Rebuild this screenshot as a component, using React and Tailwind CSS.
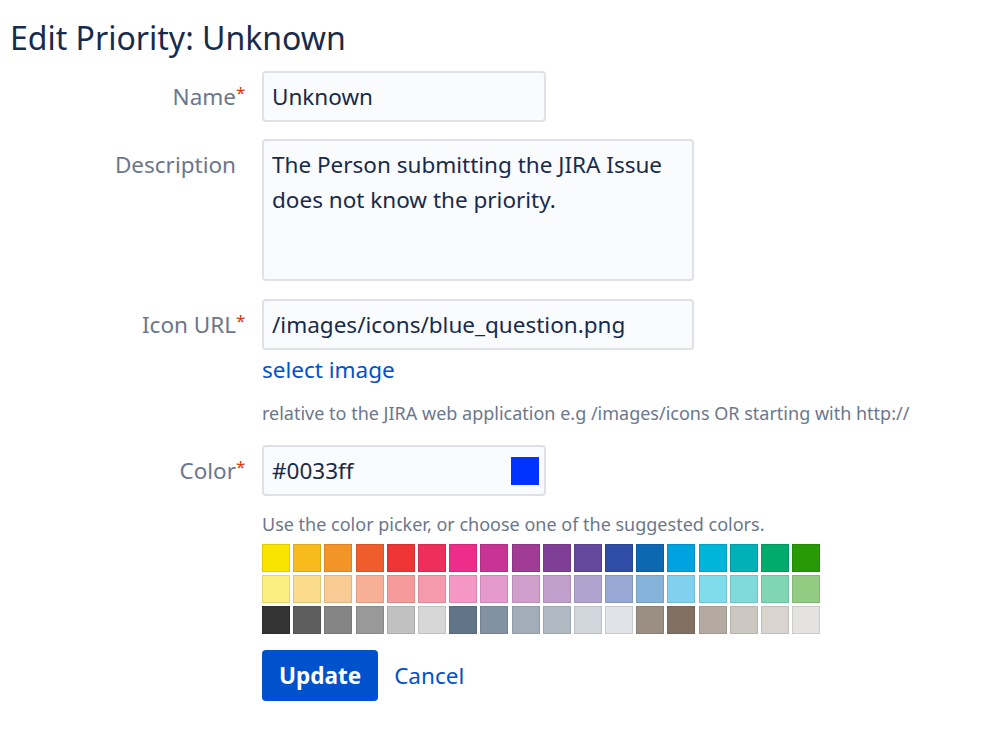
const SWATCHES = [
  ["#f9e300", "#f7bc1c", "#f39428", "#f05d2d", "#ee3535", "#ee2f5c", "#ee2d8a", "#c83496", "#a03c96", "#803f96", "#64489c", "#2f4da6", "#0c68b1", "#00a2df", "#00b6d8", "#00b2b8", "#00ab6c", "#279a06"],
  ["#fbef82", "#fadc8b", "#f8ca94", "#f7af96", "#f59b9b", "#f599ad", "#f497c4", "#e59ace", "#d19fcc", "#c09fcd", "#b0a4cf", "#97a8d4", "#85b3d9", "#80d0ee", "#80dbeb", "#80d9db", "#80d5b5", "#93cb83"],
  ["#333333", "#5e5e5e", "#858585", "#999999", "#c1c1c1", "#d7d7d7", "#617589", "#8292a2", "#a1adb9", "#b0b9c2", "#d0d6dc", "#e0e3e7", "#9b8e82", "#827163", "#b4aaa1", "#cdc7c1", "#d9d4cf", "#e5e3e1"],
];

function Label(props) {
  return (
    <div className="w-[236px] shrink-0 text-right pt-[10px] text-[22.5px] leading-[32px] text-[#6b778c]">
      {props.text}
      <span className={"inline-block w-[10px] text-left align-top text-[17px] leading-[24px] " + (props.required ? "text-[#de350b]" : "invisible")}>*</span>
    </div>
  );
}

export default function App() {
  return (
    <div className="min-h-[753px] bg-white pl-[10px] pt-[19px] text-[#172b4d]" style={{ fontFamily: '"Noto Sans", "Open Sans", sans-serif' }}>
      <h1 className="text-[32px] leading-[38px] font-normal">Edit Priority: Unknown</h1>

      <div className="mt-[14px] flex">
        <Label text="Name" required />
        <div className="ml-[16px]">
          <input
            type="text"
            defaultValue="Unknown"
            className="h-[51px] w-[284px] rounded-[4px] border-2 border-[#dfe1e6] bg-[#fafbfc] px-[8px] text-[22.5px] text-[#172b4d] outline-none"
          />
        </div>
      </div>

      <div className="mt-[17px] flex">
        <Label text="Description" />
        <div className="ml-[16px]">
          <textarea
            defaultValue="The Person submitting the JIRA Issue does not know the priority."
            className="block h-[142px] w-[432px] resize-none rounded-[4px] border-2 border-[#dfe1e6] bg-[#fafbfc] px-[8px] pt-[6px] text-[22.5px] leading-[35px] text-[#172b4d] outline-none"
          />
        </div>
      </div>

      <div className="mt-[18px] flex">
        <Label text="Icon URL" required />
        <div className="ml-[16px]">
          <input
            type="text"
            defaultValue="/images/icons/blue_question.png"
            className="h-[51px] w-[432px] rounded-[4px] border-2 border-[#dfe1e6] bg-[#fafbfc] px-[8px] text-[22.5px] text-[#172b4d] outline-none"
          />
          <div className="mt-[4px]">
            <a href="#" className="text-[22.5px] leading-[32px] text-[#0052cc]">select image</a>
          </div>
          <div className="mt-[15px] text-[18px] leading-[24px] text-[#6b778c]">
            relative to the JIRA web application e.g /images/icons OR starting with http://
          </div>
        </div>
      </div>

      <div className="mt-[20px] flex">
        <Label text="Color" required />
        <div className="ml-[16px]">
          <div className="flex h-[51px] w-[284px] items-center rounded-[4px] border-2 border-[#dfe1e6] bg-[#fafbfc] pl-[8px] pr-[5px]">
            <span className="flex-1 text-[22.5px]">#0033ff</span>
            <span className="h-[28px] w-[28px] bg-[#0033ff]" />
          </div>
          <div className="mt-[16px] text-[18px] leading-[24px] text-[#6b778c]">
            Use the color picker, or choose one of the suggested colors.
          </div>
          <div className="mt-[8px] flex flex-col gap-[3px]">
            {SWATCHES.map((row, r) => (
              <div key={r} className="flex gap-[3.2px]">
                {row.map((c, i) => (
                  <span key={i} className="h-[28px] w-[28px] border border-black/10" style={{ backgroundColor: c }} />
                ))}
              </div>
            ))}
          </div>
          <div className="mt-[16px] flex items-center gap-[16px]">
            <button className="h-[51px] rounded-[4px] bg-[#0052cc] px-[17px] text-[22.5px] font-bold text-white">Update</button>
            <a href="#" className="text-[22.5px] text-[#0052cc]">Cancel</a>
          </div>
        </div>
      </div>
    </div>
  );
}
